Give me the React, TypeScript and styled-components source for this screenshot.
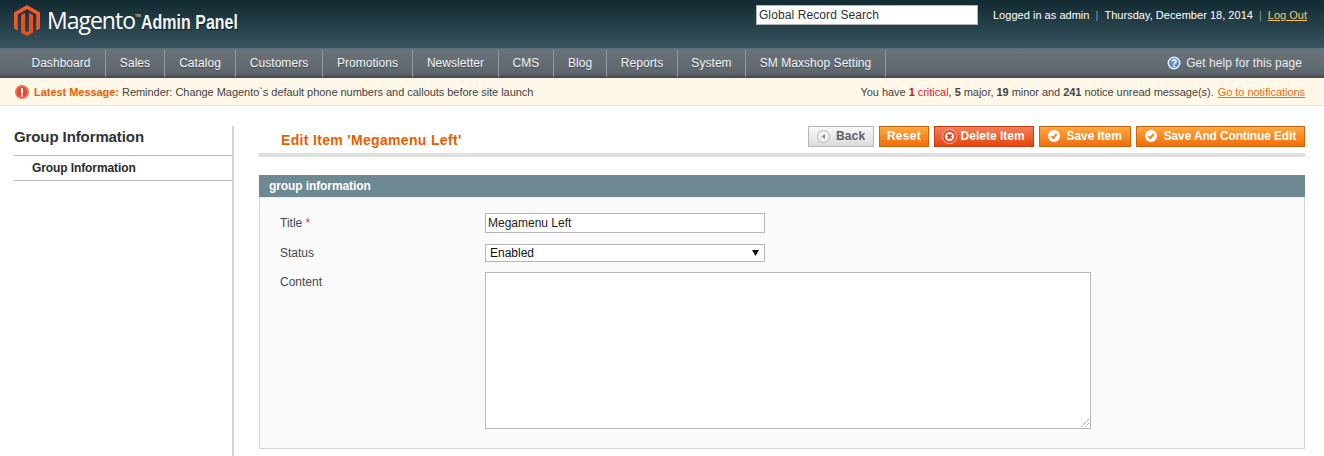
import { createGlobalStyle } from "styled-components";
import styled from "styled-components";

const navItems = [
  { name: "Dashboard", width: 89 },
  { name: "Sales", width: 59 },
  { name: "Catalog", width: 71 },
  { name: "Customers", width: 87 },
  { name: "Promotions", width: 90 },
  { name: "Newsletter", width: 86 },
  { name: "CMS", width: 55 },
  { name: "Blog", width: 53 },
  { name: "Reports", width: 71 },
  { name: "System", width: 68 },
  { name: "SM Maxshop Setting", width: 140 },
];

const GlobalStyle = createGlobalStyle`
  html, body {
    margin: 0;
    padding: 0;
    background: #fff;
    overflow: hidden;
  }
  body {
    font-family: "Liberation Sans", Arial, sans-serif;
    font-size: 12px;
    color: #2f2f2f;
  }
`;

const Page = styled.div`
  width: 1324px;
  height: 456px;
  overflow: hidden;
`;

const Header = styled.header`
  height: 49px;
  box-sizing: border-box;
  display: flex;
  justify-content: space-between;
  padding: 5px 17px 0 14px;
  background: linear-gradient(#122a32, #37535d);
  border-bottom: 1px solid #5c7079;
`;

const Brand = styled.div`
  display: flex;
  align-items: flex-start;
`;

const LogoWord = styled.span`
  font-family: "Open Sans", sans-serif;
  font-size: 23px;
  line-height: 30px;
  letter-spacing: -1px;
  color: #fff;
  margin-left: 7px;
  sup {
    font-size: 4px;
    line-height: 0;
    letter-spacing: 0;
    vertical-align: 12px;
  }
`;

const LogoSuffix = styled.span`
  font-family: "Liberation Sans", sans-serif;
  font-size: 20px;
  font-weight: bold;
  line-height: 34px;
  color: #f2f5f5;
  transform: scaleX(0.8);
  transform-origin: left center;
  text-shadow: 1px 1px 1px #0b1a20;
`;

const HeaderRight = styled.div`
  display: flex;
  align-items: flex-start;
`;

const SearchBox = styled.div`
  width: 222px;
  height: 20px;
  box-sizing: border-box;
  background: #fff;
  border: 1px solid #b6b6b6;
  padding-left: 2px;
  font-size: 12px;
  line-height: 18px;
  color: #2f2f2f;
  letter-spacing: 0.1px;
`;

const UserInfo = styled.div`
  display: flex;
  margin-left: 15px;
  font-size: 11px;
  letter-spacing: 0.03px;
  line-height: 20px;
  color: #fff;
`;

const Divider = styled.span`
  color: #8a9a9f;
  margin: 0 6px;
`;

const LogOut = styled.a`
  color: #f9c467;
  letter-spacing: 0;
  text-decoration: underline;
`;

const NavBar = styled.nav`
  height: 29px;
  box-sizing: border-box;
  display: flex;
  justify-content: space-between;
  padding-left: 17px;
  background: linear-gradient(#6b747b, #5e666d 85%, #3f464b);
`;

const NavList = styled.div`
  display: flex;
`;

const NavItem = styled.a`
  display: flex;
  justify-content: center;
  align-items: center;
  height: 27px;
  margin-top: 1px;
  padding-bottom: 2px;
  box-sizing: border-box;
  border-right: 1px solid #939a9f;
  font-size: 12px;
  letter-spacing: 0.05px;
  color: #f4f6f6;
  text-shadow: 0 1px 0 #444c52;
`;

const HelpLink = styled.a`
  display: flex;
  align-items: center;
  gap: 5px;
  height: 27px;
  padding-right: 22px;
  font-size: 12px;
  letter-spacing: 0.05px;
  color: #e8edf2;
`;

const Notice = styled.div`
  height: 28px;
  box-sizing: border-box;
  display: flex;
  justify-content: space-between;
  align-items: center;
  padding: 0 19px 0 15px;
  background: #fff7e7;
  border-bottom: 1px solid #ece3d0;
  font-size: 11px;
  letter-spacing: -0.04px;
  color: #444;
`;

const NoticeLeft = styled.div`
  display: flex;
  align-items: center;
`;

const NoticeLabel = styled.strong`
  color: #eb5e00;
  margin: 0 3px 0 5px;
`;

const Critical = styled.span`
  color: #df2a32;
  b {
    color: #df0a0a;
  }
`;

const NoticeLink = styled.a`
  color: #eb6e16;
  text-decoration: underline;
  margin-left: 4px;
`;

const Body = styled.div`
  display: flex;
  padding: 20px 19px 0 14px;
`;

const Side = styled.aside`
  width: 218px;
  height: 400px;
  flex: none;
  border-right: 2px solid #d6d6d6;
`;

const SideTitle = styled.h3`
  margin: 0;
  height: 30px;
  box-sizing: border-box;
  border-bottom: 1px solid #bbb;
  font-size: 15px;
  letter-spacing: -0.1px;
  line-height: 22px;
  font-weight: bold;
  color: #2d3336;
`;

const SideItem = styled.div`
  height: 25px;
  box-sizing: border-box;
  border-bottom: 1px solid #bbb;
  padding-left: 18px;
  font-size: 12px;
  letter-spacing: -0.1px;
  line-height: 25px;
  font-weight: bold;
  color: #2b2b2b;
`;

const Main = styled.main`
  flex: 1;
  margin-left: 25px;
`;

const TitleBar = styled.div`
  height: 31px;
  box-sizing: border-box;
  display: flex;
  justify-content: space-between;
  border-bottom: 4px solid #dfdfdf;
`;

const PageTitle = styled.h3`
  margin: 0;
  padding: 5px 0 0 22px;
  font-size: 14px;
  letter-spacing: 0.33px;
  line-height: 18px;
  font-weight: bold;
  color: #eb5e00;
`;

const Buttons = styled.div`
  display: flex;
  align-items: flex-start;
  gap: 5px;
`;

const Button = styled.button<{ $tone?: "orange" | "red" | "grey"; $spacing?: number; $pad?: number }>`
  height: 21px;
  box-sizing: border-box;
  display: flex;
  align-items: center;
  padding: 0 ${(p) => p.$pad ?? 8}px 1px;
  font-family: "Liberation Sans", sans-serif;
  font-size: 12px;
  font-weight: bold;
  letter-spacing: ${(p) => p.$spacing ?? 0}px;
  border: 1px solid
    ${(p) => (p.$tone === "grey" ? "#b6b6b6" : p.$tone === "red" ? "#c33e12" : "#c9640f")};
  color: ${(p) => (p.$tone === "grey" ? "#5b6369" : "#fff")};
  background: ${(p) =>
    p.$tone === "grey"
      ? "linear-gradient(#f8f8f8, #dcdcdc)"
      : p.$tone === "red"
      ? "linear-gradient(#f47f5c, #e8440a)"
      : "linear-gradient(#ffa93f, #f26c0b)"};
`;

const ButtonIcon = styled.svg<{ $gap: number; $shift?: number }>`
  flex: none;
  margin-left: ${(p) => p.$shift ?? 0}px;
  margin-right: ${(p) => p.$gap}px;
`;

const SectionHead = styled.div`
  margin-top: 18px;
  height: 22px;
  box-sizing: border-box;
  padding-left: 10px;
  background: #6f8992;
  font-size: 12px;
  letter-spacing: -0.1px;
  line-height: 22px;
  font-weight: bold;
  color: #fff;
`;

const Fieldset = styled.div`
  height: 252px;
  box-sizing: border-box;
  padding: 15px 20px 0;
  background: #fafafa;
  border: 1px solid #d6d6d6;
  border-top: 1px solid #ececec;
`;

const Row = styled.div<{ $height: number }>`
  display: grid;
  grid-template-columns: 205px 1fr;
  height: ${(p) => p.$height}px;
`;

const Label = styled.label<{ $raise?: number }>`
  margin-top: ${(p) => -(p.$raise ?? 0)}px;
  font-size: 12px;
  line-height: 20px;
  color: #444a4e;
  b {
    color: #eb340a;
    font-weight: normal;
  }
`;

const TextInput = styled.div`
  width: 280px;
  height: 20px;
  box-sizing: border-box;
  background: #fff;
  border: 1px solid #b6b6b6;
  padding-left: 2px;
  font-size: 12px;
  line-height: 18px;
  color: #222;
`;

const SelectBox = styled(TextInput)`
  height: 18px;
  line-height: 16px;
  padding: 0 5px 0 4px;
  display: flex;
  justify-content: space-between;
  align-items: center;
  color: #111;
`;

const TextArea = styled.div`
  position: relative;
  width: 606px;
  height: 157px;
  box-sizing: border-box;
  background: #fff;
  border: 1px solid #b6b6b6;
`;

const Grip = styled.svg`
  position: absolute;
  right: 0;
  bottom: 0;
`;

const LogoMark = () => (
  <svg width="26" height="31" viewBox="0 0 26 31">
    <path d="M13 0 26 7.500V23.500L22.300 25.600V9.600L13 4.200 3.700 9.600V25.600L0 23.500V7.500z" fill="#f1592a" />
    <path d="M11.100 7.700V26L13 27.100 14.900 26V7.700L19 10.100V27.600L13 31 7 27.600V10.100z" fill="#ea4f1f" />
  </svg>
);

const SaveIcon = () => (
  <ButtonIcon $gap={7} width="12" height="12" viewBox="0 0 12 12">
    <circle cx="6" cy="6" r="6" fill="#fff" />
    <path d="M3.500 6.200 5.400 8.200 8.500 4" fill="none" stroke="#f07d12" strokeWidth="1.800" />
  </ButtonIcon>
);

const App = () => {
  return (
    <Page>
      <GlobalStyle />
      <Header>
        <Brand>
          <LogoMark />
          <LogoWord>
            Magento<sup>TM</sup>
          </LogoWord>
          <LogoSuffix>Admin Panel</LogoSuffix>
        </Brand>
        <HeaderRight>
          <SearchBox>Global Record Search</SearchBox>
          <UserInfo>
            Logged in as admin
            <Divider>|</Divider>
            Thursday, December 18, 2014
            <Divider>|</Divider>
            <LogOut>Log Out</LogOut>
          </UserInfo>
        </HeaderRight>
      </Header>
      <NavBar>
        <NavList>
          {navItems.map((item) => (
            <NavItem key={item.name} style={{ width: item.width }}>
              {item.name}
            </NavItem>
          ))}
        </NavList>
        <HelpLink>
          <svg width="14" height="14" viewBox="0 0 14 14">
            <circle cx="7" cy="7" r="6.500" fill="#e6f0fa" />
            <circle cx="7" cy="7" r="5" fill="#5d8fc4" />
            <text x="7" y="10.500" textAnchor="middle" fontSize="10" fontWeight="bold" fill="#fff" fontFamily="Liberation Sans">?</text>
          </svg>
          Get help for this page
        </HelpLink>
      </NavBar>
      <Notice>
        <NoticeLeft>
          <svg width="14" height="14" viewBox="0 0 14 14">
            <circle cx="7" cy="7" r="7" fill="#e8705a" />
            <circle cx="7" cy="7" r="5" fill="#e2492f" />
            <rect x="6" y="3" width="2" height="5.500" fill="#fff" />
            <rect x="6" y="9.500" width="2" height="2" fill="#fff" />
          </svg>
          <NoticeLabel>Latest Message:</NoticeLabel>
          Reminder: Change Magento`s default phone numbers and callouts before site launch
        </NoticeLeft>
        <div>
          You have{" "}
          <Critical>
            <b>1</b> critical
          </Critical>
          , <b>5</b> major, <b>19</b> minor and <b>241</b> notice unread message(s).
          <NoticeLink>Go to notifications</NoticeLink>
        </div>
      </Notice>
      <Body>
        <Side>
          <SideTitle>Group Information</SideTitle>
          <SideItem>Group Information</SideItem>
        </Side>
        <Main>
          <TitleBar>
            <PageTitle>Edit Item 'Megamenu Left'</PageTitle>
            <Buttons>
              <Button $tone="grey" $spacing={0.2}>
                <ButtonIcon $gap={6} width="13" height="13" viewBox="0 0 13 13">
                  <circle cx="6.500" cy="6.500" r="6" fill="#f2f2f2" stroke="#b5b5b5" />
                  <path d="M8 4v5L4.500 6.500z" fill="#8d8d8d" />
                </ButtonIcon>
                Back
              </Button>
              <Button $spacing={0.3} $pad={6.5}>Reset</Button>
              <Button $tone="red">
                <ButtonIcon $gap={4} $shift={-1} width="15" height="15" viewBox="0 0 15 15">
                  <circle cx="7.500" cy="7.500" r="7" fill="#e2492f" stroke="#f6b6a0" />
                  <circle cx="7.500" cy="7.500" r="4.500" fill="#fff" />
                  <path d="M5.500 5.500l4 4M9.500 5.500l-4 4" stroke="#d63a1a" strokeWidth="1.800" />
                </ButtonIcon>
                Delete Item
              </Button>
              <Button $spacing={-0.1}>
                <SaveIcon />
                Save Item
              </Button>
              <Button $spacing={-0.15}>
                <SaveIcon />
                Save And Continue Edit
              </Button>
            </Buttons>
          </TitleBar>
          <SectionHead>group information</SectionHead>
          <Fieldset>
            <Row $height={31}>
              <Label>
                Title <b>*</b>
              </Label>
              <TextInput>Megamenu Left</TextInput>
            </Row>
            <Row $height={28}>
              <Label $raise={1}>Status</Label>
              <SelectBox>
                Enabled
                <svg width="7" height="6" viewBox="0 0 7 6">
                  <path d="M0 0h7L3.500 6z" fill="#111" />
                </svg>
              </SelectBox>
            </Row>
            <Row $height={160}>
              <Label>Content</Label>
              <TextArea>
                <Grip width="12" height="12" viewBox="0 0 12 12">
                  <path d="M11 3 3 11M11 7l-4 4" stroke="#777" strokeDasharray="1 1" />
                </Grip>
              </TextArea>
            </Row>
          </Fieldset>
        </Main>
      </Body>
    </Page>
  );
};

export default App;
